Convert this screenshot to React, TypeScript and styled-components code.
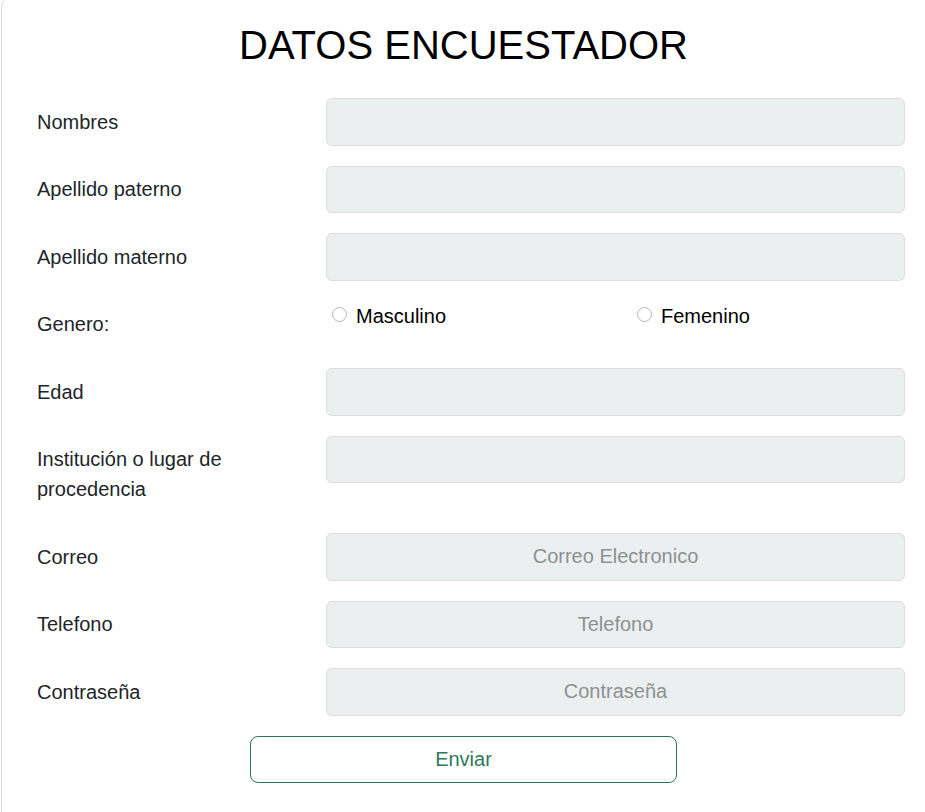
import styled, {createGlobalStyle} from 'styled-components';

const GlobalStyle = createGlobalStyle`
  html, body {
    margin: 0;
    padding: 0;
    background: #fff;
    overflow: hidden;
  }
  body {
    font-family: "Liberation Sans", Arial, sans-serif;
    color: #212529;
  }
  * {
    box-sizing: border-box;
  }
`;

const Card = styled.form`
  margin: -3px -4px 0 1px;
  border: 1px solid #d9d9d9;
  border-radius: 10px;
  background: #fff;
  padding: 23px 23px 40px 35px;
  min-height: 830px;
`;

const Title = styled.h1`
  margin: 0 0 29px;
  padding-right: 15px;
  font-size: 40px;
  line-height: 48px;
  font-weight: 400;
  color: #000;
  text-align: center;
`;

const Row = styled.div`
  display: grid;
  grid-template-columns: 289px 1fr;
  margin-bottom: 20px;
`;

const Label = styled.label`
  padding: 8.75px 40px 8.75px 0;
  font-size: 20px;
  line-height: 30px;
`;

const Input = styled.input`
  display: block;
  width: 100%;
  height: 47.5px;
  padding: 8px 15px;
  font-family: "Liberation Sans", Arial, sans-serif;
  font-size: 20px;
  color: #212529;
  text-align: center;
  background: #ecefef;
  border: 1px solid #dadede;
  border-radius: 6px;
  outline: none;

  &::placeholder {
    color: #8c9292;
  }
`;

const RadioGroup = styled.div`
  display: grid;
  grid-template-columns: 305px 1fr;
`;

const RadioOption = styled.label`
  display: flex;
  align-items: center;
  gap: 9px;
  padding-left: 6px;
  height: 30px;
  font-size: 20px;
  line-height: 30px;
  color: #000;
`;

const Radio = styled.span`
  display: inline-block;
  width: 15px;
  height: 15px;
  border: 1px solid #b5b5b5;
  border-radius: 50%;
  background: #fff;
  margin-top: -3px;
`;

const ButtonRow = styled.div`
  display: flex;
  justify-content: center;
  padding-right: 15px;
`;

const SubmitButton = styled.button`
  width: 427px;
  height: 47px;
  background: #fff;
  border: 1px solid #2c7553;
  border-radius: 8px;
  color: #2d7a58;
  font-family: "Liberation Sans", Arial, sans-serif;
  font-size: 20px;
  cursor: pointer;
`;

const fields = [
  {label: 'Nombres'},
  {label: 'Apellido paterno'},
  {label: 'Apellido materno'},
];

const moreFields = [
  {label: 'Edad'},
  {label: 'Institución o lugar de procedencia'},
  {label: 'Correo', placeholder: 'Correo Electronico'},
  {label: 'Telefono', placeholder: 'Telefono'},
  {label: 'Contraseña', placeholder: 'Contraseña'},
];

export default function App() {
  return (
    <>
      <GlobalStyle />
      <Card onSubmit={(e) => e.preventDefault()}>
        <Title>DATOS ENCUESTADOR</Title>

        {fields.map((f) => (
          <Row key={f.label}>
            <Label>{f.label}</Label>
            <Input type="text" />
          </Row>
        ))}

        <Row>
          <Label>Genero:</Label>
          <RadioGroup>
            <RadioOption>
              <Radio />
              Masculino
            </RadioOption>
            <RadioOption>
              <Radio />
              Femenino
            </RadioOption>
          </RadioGroup>
        </Row>

        {moreFields.map((f) => (
          <Row key={f.label}>
            <Label>{f.label}</Label>
            <Input type="text" placeholder={f.placeholder} />
          </Row>
        ))}

        <ButtonRow>
          <SubmitButton type="submit">Enviar</SubmitButton>
        </ButtonRow>
      </Card>
    </>
  );
}
